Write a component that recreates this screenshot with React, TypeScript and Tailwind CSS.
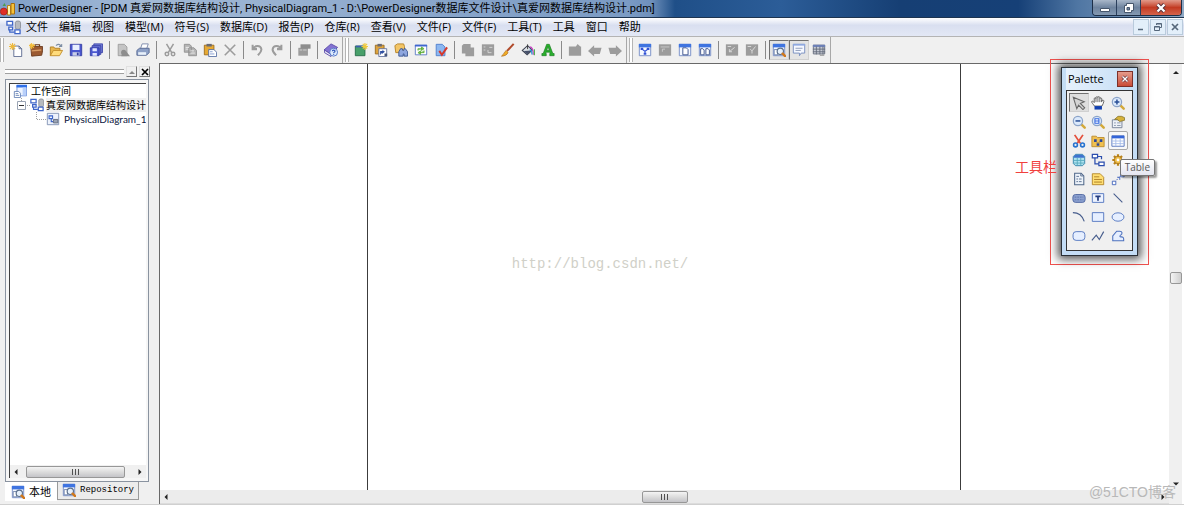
import type { ReactNode } from "react";

const blue = "#3f66c8";
const gray = "#9c9c9c";

const Lens = () => (
  <>
    <circle cx="9.5" cy="9.5" r="3.6" fill="#e6f0fb" stroke="#5b6f8c" strokeWidth="1.3" />
    <path d="M12.2 12.2 15 15" stroke="#d0781c" strokeWidth="2.800" strokeLinecap="round" />
  </>
);
const Win = () => (
  <>
    <path d="M1.5 1.5h13v13h-13z" fill="#f4f8ff" stroke="#7189c4" />
    <path d="M1 1h14v4H1z" fill="#3f74e0" />
  </>
);
const Zoom = ({ sign }: { sign: ReactNode }) => (
  <>
    <path d="m11 11 3.500 3.500" stroke="#d3a93a" strokeWidth="2.8" strokeLinecap="round" />
    <circle cx="6.8" cy="6.8" r="5.300" fill="#dbe9fb" stroke="#8ba3c8" strokeWidth="1.4" />
    {sign}
  </>
);
const GrayWin = () => <path d="M1 1.5h14v13H1z" fill={gray} />;

const icons: Record<string, ReactNode> = {
  new: (
    <>
      <path d="M5.5 3.5h6l3 3v9h-9z" fill="#fff" stroke="#56658c" />
      <path d="M11.5 3.5v3h3" fill="none" stroke="#56658c" />
      <path d="M4 0v8M0 4h8M1 1l6 6M7 1 1 7" stroke="#efb93a" strokeWidth="1.3" />
    </>
  ),
  project: (
    <>
      <path d="M7 4V2h5v2" fill="none" stroke="#6b3a1c" strokeWidth="1.4" />
      <path d="M2 4h13.500v5l-1 5L3 15z" fill="#9b5a31" stroke="#6a3a1e" />
      <path d="M3 9l11-1" stroke="#d89d66" strokeWidth="1.5" />
      <path d="M3 0v7M0 3h7M1 1l4.500 4.500M5.500 1 1 5.500" stroke="#f3bd3c" strokeWidth="1.2" />
    </>
  ),
  open: (
    <>
      <path d="M1.500 14.500V4.500h4l1 1.500h6v3" fill="#e8b64c" stroke="#b07d1e" />
      <path d="m1.500 14.500 3.500-6h10.500l-3.500 6z" fill="#ffdc7c" stroke="#c08a26" />
      <path d="M8 3c2-2 4-2 6 .5M14.500 1v3h-3" fill="none" stroke="#7d8ea5" strokeWidth="1.2" />
    </>
  ),
  save: (
    <>
      <path d="M1.500 1.500h13v13h-13z" fill="#4a56cf" stroke="#323ca2" />
      <path d="M4 2h8v6H4z" fill="#e8efff" />
      <path d="M4 10.500h8v4H4z" fill="#c9cfe8" />
      <path d="M9 11h2v3H9z" fill="#323ca2" />
    </>
  ),
  saveAll: (
    <>
      <path d="M5.500 1h10v10h-10z" fill="#7780d8" stroke="#3b44a8" />
      <path d="M3.500 3h10v10h-10z" fill="#6670d4" stroke="#3b44a8" />
      <path d="M1.500 5.500h10v9h-10z" fill="#4a56cf" stroke="#323ca2" />
      <path d="M4 6h5v3.500H4zM4 11.500h5v3H4z" fill="#dfe5ff" />
    </>
  ),
  preview: (
    <>
      <path d="M2.500 1.500h7l3 3v10h-10z" fill="#c4c4c4" stroke={gray} />
      <path d="M6.500 13a3.200 3.200 0 1 1 5.500-3l4 5H6z" fill="#8d8d8d" />
    </>
  ),
  print: (
    <>
      <path d="m5 7 2-6h7l-2 6z" fill="#fff" stroke="#7685a8" />
      <path d="M1 8.500 4 6h11v5l-3 3H1z" fill="#8da0c6" stroke="#53658f" />
      <path d="M2.500 10.500h9v3h-9z" fill="#e8f0fb" />
    </>
  ),
  cut: (
    <g fill="none" stroke={gray} strokeWidth="1.7">
      <path d="m4 1 6 10M12 1 6 11" />
      <circle cx="4.500" cy="12.500" r="2" />
      <circle cx="11.500" cy="12.500" r="2" />
    </g>
  ),
  copy: (
    <g fill="#b5b5b5" stroke="#8f8f8f">
      <path d="M1.500 1.500h6l2 2v7h-8zM6.500 5.500h6l3 3v6h-9z" />
      <path d="M3 5h4M3 7h3M8.500 9h4M8.500 11.500h5" stroke="#f0f0f0" />
    </g>
  ),
  paste: (
    <>
      <path d="M1.500 2.500h11v11h-11z" fill="#e6a933" stroke="#9b6a1c" />
      <path d="M4 1h6v3H4z" fill="#6a6a72" />
      <path d="M6.500 7.500h6l3 3v5h-9z" fill="#fff" stroke="#50699f" />
      <path d="M8 10h3M8 12.500h5" stroke="#7c96cc" />
    </>
  ),
  delete: <path d="m2 2 12 12M14 2 2 14" stroke={gray} strokeWidth="1.8" />,
  undo: <path d="M3 2v5h5M3.500 7C5 2.500 12 2 13 7c.4 3-2 5-4 7" fill="none" stroke={gray} strokeWidth="2.300" />,
  redo: <path d="M13 2v5H8M12.500 7C11 2.500 4 2 3 7c-.4 3 2 5 4 7" fill="none" stroke={gray} strokeWidth="2.300" />,
  props: (
    <>
      <path d="M1.500 5.500h11v9h-11z" fill={gray} />
      <path d="M4 1.500h11.500v5H4z" fill="#8d8d8d" />
      <path d="M3 8h3m1 0h4" stroke="#d5d5d5" />
    </>
  ),
  help: (
    <>
      <path d="m0 8 8-7 7.500 4L8 13z" fill="#8372d2" stroke="#5647a6" />
      <path d="m.5 8 7.500 5v2.500L.5 11z" fill="#e8e6f6" stroke="#5647a6" />
      <circle cx="11" cy="10.500" r="4.500" fill="#dceafd" stroke="#4b70c4" />
      <path d="M9.500 9.500c.2-2 3.200-1.800 3 0-.1 1-1.500 1-1.500 2.200m0 .8v1" fill="none" stroke="#2950b5" strokeWidth="1.300" />
    </>
  ),
  package: (
    <>
      <path d="M1.500 3.500h11v11h-11z" fill="#48a06a" stroke="#236a47" />
      <path d="M2 3h8v2H2z" fill="#3c5fae" />
      <path d="M12.500 0v8M8.500 4h8M10 1l5 5.500M15 1l-5 5.500" stroke="#f0c93c" strokeWidth="1.300" />
    </>
  ),
  pasteShortcut: (
    <>
      <path d="M1.500 2.500h10v10h-10z" fill="#dda33c" stroke="#97691f" />
      <path d="M4 1h5v3H4z" fill="#6a6a72" />
      <path d="M5.500 6.500h9v9h-9z" fill="#fff" stroke="#5f6f9a" />
      <path d="M7 14V9h3l-1-1.500 3.500 2.500L9 12.500V11" fill="#2e4ea0" />
      <path d="M12 12h3v3h-3z" fill="#46557b" />
    </>
  ),
  find: (
    <>
      <path d="m1 3 3-2h7l1 3v7H2z" fill="#f3c565" stroke="#b58122" />
      <path d="M5.500 10 7.500 6.500H9.500l.5 2h1l.5-2h1.500L15.500 10v5h-4v-2.500h-1V15h-5z" fill="#8ea6de" stroke="#37538f" />
    </>
  ),
  refresh: (
    <>
      <path d="M1.500 2.500h13v11h-13z" fill="#fff" stroke="#5676c2" />
      <path d="M1 2h14v2H1z" fill="#3f66d0" />
      <path d="M4.500 8.500V6.500H10M8.500 4.500l3 2-3 2zM11.500 8.500v2.500H6M7.500 9l-3 2 3 2z" fill="#55a82c" stroke="#55a82c" strokeWidth=".9" fillOpacity=".6" />
    </>
  ),
  check: (
    <>
      <path d="M2.500 1.500h7l3 3v10h-10z" fill="#8cb7f0" stroke="#4d7dcc" />
      <path d="m6 9 3 4.500L15 5" fill="none" stroke="#d5382b" strokeWidth="2.200" />
    </>
  ),
  grayCopy: <path d="M1 3 3 1h8v4h4v10H5v-3H1z" fill={gray} />,
  grayRule: (
    <>
      <GrayWin />
      <path d="M3 8h2M3 4.500h2M9.500 5h3.500M8 8v3h4" fill="none" stroke="#d9d9d9" />
    </>
  ),
  brush: (
    <>
      <path d="m7 9 7.500-8" stroke="#b04a2a" strokeWidth="2.300" />
      <path d="M.5 15c3.500 0 7-1.500 7.500-4.500L6 8.500C3.500 10 3.500 13 .5 15" fill="#f0ac24" stroke="#a8641a" strokeWidth=".7" />
    </>
  ),
  fill: (
    <>
      <path d="m1.500 8.500 6-5.500 5.500 5-6 5.500z" fill="#dfe3e8" stroke="#3c4250" strokeWidth="1.200" />
      <path d="m3 9 9-.5-5 4.500z" fill="#46506a" />
      <path d="M7.500 7V1.500" stroke="#333" />
      <path d="M10 4.500c3 0 4 3 4 9" fill="none" stroke="#c43fc0" strokeWidth="1.500" />
      <path d="M10 8c1.500 0 2.500 2 2.500 5" fill="none" stroke="#2f9bd8" strokeWidth="1.500" />
      <path d="M15.300 7v7" stroke="#49b24b" strokeWidth="1.300" />
    </>
  ),
  font: (
    <path d="M1 14.500V12h1.500L6.500 1.500h3L13.500 12H15v2.500h-5V12h.800l-.5-1.500H5.700L5.200 12H6v2.500zM6.500 8.300h3L8 4.200z" fill="#28b12c" stroke="#14741b" strokeWidth=".7" />
  ),
  grayUp: <path d="M1 4h8l2-3 3 3h1v10.500H1z" fill={gray} />,
  back: <path d="m0 9 7-6.500v3h8.500l-2 7H7v3z" fill={gray} />,
  forward: <path d="m16 9-7-6.500v3H.500l2 7H9v3z" fill={gray} />,
  dgY: (
    <>
      <Win />
      <path d="m4.500 7 3.500 2.500v3M11.500 7 8 9.500" fill="none" stroke="#2f4fd4" strokeWidth="1.300" />
      <path d="M3 5.500h3v2.500H3zM10 5.500h3v2.500h-3zM6.500 11h3v2.500h-3z" fill="#2f4fd4" />
    </>
  ),
  dgGray: (
    <>
      <GrayWin />
      <path d="M3 4.500h10M5 10V7h3" fill="none" stroke="#cfcfcf" />
    </>
  ),
  dgPage: (
    <>
      <Win />
      <path d="M5.500 5.500h4l2 2v6h-6z" fill="#fff" stroke="#334a86" />
    </>
  ),
  dgPages: (
    <>
      <Win />
      <path d="M3 6.500h2.500l1.500 1.500v5.500H3zM9 6.500h2.500L13 8v5.500H9z" fill="#fff" stroke="#334a86" />
    </>
  ),
  grayA: (
    <>
      <GrayWin />
      <path d="M3 4h4M5 10l6-5M5 7v3h3" fill="none" stroke="#e0e0e0" />
    </>
  ),
  grayB: (
    <>
      <GrayWin />
      <path d="M3 4h4M8 9l4-5M6 7l2 2v3" fill="none" stroke="#e0e0e0" />
    </>
  ),
  browse: (
    <>
      <Win />
      <path d="M2.500 7.500h4v6h-4z" fill="#fff" stroke="#6c7fa8" />
      <Lens />
    </>
  ),
  output: (
    <>
      <path d="M1.500 1.500h13v10h-4l-2 3v-3h-7z" fill="#f5f8ff" stroke="#7088bd" />
      <path d="M1 1h14v2H1z" fill="#8fa9e0" />
      <path d="M4 6h8M4 8.500h6" stroke="#8593b4" />
    </>
  ),
  grid: (
    <>
      <path d="M1.500 2.500h13v10h-13z" fill="#c6cad4" stroke="#646b7c" />
      <path d="M1 2h14v2.500H1z" fill="#6c80b8" />
      <path d="M5 4v9M9 4v9M12.500 4v9M1 7h14M1 10h14" stroke="#646b7c" />
      <path d="M9 14h5" stroke="#888" />
    </>
  ),
  workspace: (
    <>
      <path d="M4.500 1.500h11v12h-11z" fill="#eef4ff" stroke="#6c8fda" />
      <path d="M4 1h12v3H4z" fill="#2f6fe8" />
      <path d="M11 4h4v9h-4z" fill="#b9d0fa" />
      <path d="M1.500 8.500h5l2 2v5h-7z" fill="#fff" stroke="#6480b4" />
      <path d="M3 11h3M3 13h4" stroke="#6480b4" />
    </>
  ),
  model: (
    <>
      <path d="M10 2.500c0-2 5.500-2 5.500 0v6c0 2-5.500 2-5.500 0z" fill="#b6bac0" stroke="#80858d" strokeWidth=".8" />
      <path d="M1 1.500h6v4H1zM9.500 10.500h5.500v4H9.500zM3 7.500h4v3H3z" fill="#fff" stroke={blue} strokeWidth="1.400" />
      <path d="M4 10.500v2.500h5" fill="none" stroke={blue} strokeWidth="1.300" />
    </>
  ),
  diagram: (
    <>
      <path d="M1.500 1.500h13v13h-13z" fill="#eef3fc" stroke="#7c8eb0" />
      <path d="M3.500 4.500h4v3h-4zM6 8v3h2" fill="none" stroke={blue} strokeWidth="1.300" />
      <path d="M8.500 8.500h5v4h-5z" fill="#9aa3b4" stroke="#60697c" />
    </>
  ),
  app: (
    <>
      <path d="M7.500 4.500h3v9.500h-3z" fill="#fff2ad" stroke="#b88218" />
      <path d="M11 2.500h3.500v10.500H11z" fill="#f5c23a" stroke="#a66f10" />
      <path d="m2.500 5 2-3 1.500 3z" fill="#4c9c50" />
      <circle cx="3.800" cy="10.500" r="3.500" fill="#df2f25" stroke="#98150f" strokeWidth=".6" />
    </>
  ),
  pointer: <path d="m1.500 1.500 12.500 5-4.500 2 5 5-2 2-5-5-2 4z" fill="#d4d4d4" stroke="#666" strokeWidth="1.200" />,
  hand: (
    <>
      <path d="M4 11.500C3 10 .3 7 .8 6.300S2.700 6 3.700 7.500V3c0-1.300 2-1.300 2 0V1.800c0-1.300 2.200-1.300 2.200 0V1.500c0-1.200 2.200-1 2.200.5v1c0-1.200 2.200-1 2.200.3V6c.7-1.800 2.500-1.500 2.400 0-.2 2-1.200 3.500-2.200 5.500z" fill="#fff" stroke="#444" strokeWidth=".9" />
      <path d="M5.700 3v4M7.900 2v5M10.100 3v4M12.200 5v2" stroke="#444" strokeWidth=".9" />
      <path d="M4 11.500h8.500V15.500H4z" fill="#1240b0" />
    </>
  ),
  zoomIn: <Zoom sign={<path d="M4 6.800h5.600M6.800 4v5.600" stroke="#274d96" strokeWidth="1.700" />} />,
  zoomOut: <Zoom sign={<path d="M4 6.800h5.600" stroke="#274d96" strokeWidth="1.700" />} />,
  zoomFit: <Zoom sign={<path d="M4.500 4.200h4.500v5.200H4.500zM5 6.800h4" fill="#fff" stroke="#3468e0" strokeWidth="1.200" />} />,
  openProps: (
    <>
      <path d="M1.500 5.500h11v9h-11z" fill="#edf1f7" stroke="#6f7b92" />
      <path d="M3.500 9h2m1.500 0h4M3.500 12h2m1.500 0h4" stroke="#8490a8" />
      <path d="M4 5 8 1.500h4L15.500 3v3L10 7.500 7 5z" fill="#d6b23c" stroke="#7d6a20" strokeWidth=".8" />
    </>
  ),
  scissors: (
    <>
      <path d="m3 1 6.500 9.500M12.500 1 6 10.500" stroke="#e4503b" strokeWidth="2" />
      <g fill="none" stroke="#2672cf" strokeWidth="1.800">
        <circle cx="4" cy="12.500" r="2.200" />
        <circle cx="12" cy="12.500" r="2.200" />
      </g>
    </>
  ),
  folder: (
    <>
      <path d="M1 14.500v-12h5l1.500 1.500h7.500v10.500z" fill="#f0c050" stroke="#b98a2c" />
      <path d="M3.500 6h3v3h-3zM10 6h3v3h-3zM6.500 10.500h3v3h-3z" fill="#27459c" />
      <path d="m6 8.500 2 2.500 2-2.500" fill="none" stroke="#8a7a50" />
    </>
  ),
  table: (
    <>
      <path d="M1 2h14v12H1z" fill="#fff" stroke="#4f70bd" />
      <path d="M1 2h14v3H1z" fill="#3465d8" />
      <path d="M5.500 5v9M10.500 5v9M1 8h14M1 11h14" stroke="#a5bbe8" />
    </>
  ),
  view: (
    <>
      <path d="M1.500 4 4 1.500h8L14.500 4v8L12 14.500H4L1.500 12z" fill="#afe3f0" stroke="#2e7ba5" />
      <path d="M2 4 4 2h8l2 2v1.500H2z" fill="#3e73cf" />
      <path d="M6 5.500v9M10 5.500v9M1.500 8.500h13M1.500 11.500h13" stroke="#56a9bd" />
    </>
  ),
  reference: (
    <g fill="#fff" stroke="#2b4eae" strokeWidth="1.400">
      <path d="M4.500 5.500v7H9M8 4h4v3" fill="none" />
      <path d="M1.500 1.500h6v4h-6zM9 10.500h6v4H9z" />
    </g>
  ),
  procedure: (
    <>
      <path d="M8 1.500v13M1.500 8h13M3.400 3.400l9.200 9.200M12.600 3.400l-9.200 9.200" stroke="#b98218" strokeWidth="2.500" />
      <circle cx="8" cy="8" r="4.300" fill="#edbd4a" stroke="#a87213" />
      <circle cx="8" cy="8" r="1.600" fill="#fff" />
    </>
  ),
  file: (
    <>
      <path d="M3 1.500h7.500l3 3v10H3z" fill="#edf3fa" stroke="#52698b" strokeWidth="1.200" />
      <path d="M10 1.500v3h3M5 5h3M5 8h2m1 0h3M5 11h2m1 0h3" fill="none" stroke="#52698b" />
    </>
  ),
  note: (
    <>
      <path d="M1.500 2h9L14.500 6v8.500h-13z" fill="#ffdf73" stroke="#b08226" />
      <path d="M3.500 5.500h6M3.500 8.500h9M3.500 11.500h9" stroke="#a57721" />
    </>
  ),
  link: (
    <>
      <path d="m4 12 7-8" stroke="#3b5fb9" strokeDasharray="2 1.500" />
      <path d="M1.500 10.500h4v4h-4zM11 1.500h4v4h-4z" fill="#fff" stroke="#3b5fb9" />
      <path d="M7 6h3v3" fill="none" stroke="#3b5fb9" />
    </>
  ),
  title: (
    <>
      <rect x="1" y="4" width="14" height="9" rx="3" fill="#8ba0cf" stroke="#4c649f" />
      <path d="M3 7h10M3 10h10" stroke="#5b72ad" strokeDasharray="2 1" />
    </>
  ),
  text: (
    <>
      <path d="M1.500 3h13v10h-13z" fill="#edf3ff" stroke="#4c70bd" />
      <path d="M5 6h6M8 6v5" stroke="#263f82" strokeWidth="2" />
    </>
  ),
  line: <path d="m3 3 10 10" stroke="#465c8c" strokeWidth="1.300" />,
  arc: <path d="M1 3c6 0 11 4 13 10" fill="none" stroke="#465c8c" strokeWidth="1.300" />,
  rect: <path d="M1.500 3h13v10h-13z" fill="#e6efff" stroke="#4c70bd" />,
  ellipse: <ellipse cx="8" cy="8" rx="6.800" ry="4.800" fill="#e6efff" stroke="#4c70bd" />,
  rounded: <rect x="1.200" y="3" width="13.500" height="10" rx="3.500" fill="#e6efff" stroke="#4c70bd" />,
  polyline: <path d="m1 13 5-6 3.500 5L14.500 3" fill="none" stroke="#465c8c" strokeWidth="1.300" />,
  polygon: <path d="M2 13.500V8l4.500-5.500H10c3 0 3.500 3 1 4.500-1.500 1-1 2 .5 2 2-.2 3 1 3 2.500v2z" fill="#e6efff" stroke="#4c70bd" strokeWidth="1.200" />,
};

function Icon({ name, className = "size-3.5" }: { name: string; className?: string }) {
  return (
    <svg viewBox="0 0 16 16" className={`${className} shrink-0`} aria-hidden="true">
      {icons[name]}
    </svg>
  );
}

const menus = ["文件", "编辑", "视图", "模型(M)", "符号(S)", "数据库(D)", "报告(P)", "仓库(R)", "查看(V)", "文件(F)", "文件(F)", "工具(T)", "工具", "窗口", "帮助"];

const toolbars: string[][][] = [
  [["new", "project", "open", "save", "saveAll"], ["preview", "print"], ["cut", "copy", "paste", "delete"], ["undo", "redo"], ["props"], ["help"]],
  [["package", "pasteShortcut", "find", "refresh", "check"], ["grayCopy", "grayRule", "brush", "fill", "font"], ["grayUp", "back", "forward"]],
  [["dgY", "dgGray", "dgPage", "dgPages"], ["grayA", "grayB"], ["browse", "output", "grid"]],
];

const paletteTools = [
  "pointer", "hand", "zoomIn",
  "zoomOut", "zoomFit", "openProps",
  "scissors", "folder", "table",
  "view", "reference", "procedure",
  "file", "note", "link",
  "title", "text", "line",
  "arc", "rect", "ellipse",
  "rounded", "polyline", "polygon",
];

function TitleBar() {
  return (
    <header className="flex h-[18px] shrink-0 items-center border-b border-[#1d3450] bg-[linear-gradient(90deg,#7f9fc8_0%,#a3bad6_12%,#86a3c9_40%,#7b9bc4_53%,#6f90bb_55%,#1f4f88_57%,#2c5d98_66%,#163f74_76%,#164077_86%,#4f76a3_91%,#8fa8c4_100%)]">
      <Icon name="app" className="size-4" />
      <h1 className="ml-0.5 flex-1 truncate font-['Roboto','Noto_Sans_CJK_SC',sans-serif] text-[11px] leading-[17px] text-black">
        PowerDesigner - [PDM 真爱网数据库结构设计, PhysicalDiagram_1 - D:\PowerDesigner数据库文件设计\真爱网数据库结构设计.pdm]
      </h1>
      <div className="mr-0.5 flex h-4 self-start overflow-hidden rounded-b-[4px] border border-t-0 border-[#1d2f48]">
        <button aria-label="最小化" className="flex w-6 items-center justify-center border-r border-[#2b3f5c] bg-linear-to-b from-[#a9b7c9] via-[#6f849f] to-[#8499b2]">
          <svg viewBox="0 0 12 10" className="h-2.5 w-3"><path d="M1.500 5.500h9v3h-9z" fill="#fff" stroke="#46566c" /></svg>
        </button>
        <button aria-label="还原" className="flex w-6 items-center justify-center border-r border-[#2b3f5c] bg-linear-to-b from-[#a9b7c9] via-[#6f849f] to-[#8499b2]">
          <svg viewBox="0 0 12 12" className="size-3"><path d="M3.500 1.500h7v7h-2v2h-7v-7h2z" fill="#fff" stroke="#46566c" /><path d="M4 5.500h2.500V8H4z" fill="#6f849f" stroke="#46566c" /></svg>
        </button>
        <button aria-label="关闭" className="flex w-10 items-center justify-center bg-linear-to-b from-[#e0998a] via-[#c23a22] to-[#d4624a]">
          <svg viewBox="0 0 12 12" className="size-3"><path d="m2.500 2.500 7 7M9.500 2.500l-7 7" stroke="#54303a" strokeWidth="4" /><path d="m2.500 2.500 7 7M9.500 2.500l-7 7" stroke="#fff" strokeWidth="2.300" /></svg>
        </button>
      </div>
    </header>
  );
}

function MenuBar() {
  const mdi = "flex size-4 items-center justify-center border border-[#b9cbdc] bg-[#e3effa]";
  return (
    <nav className="flex h-[19px] shrink-0 items-center border-b border-[#b4b4b4] bg-linear-to-b from-white via-[#d9dff0] via-40% to-[#e3e8f5] pl-1.5">
      <Icon name="model" className="size-[15px]" />
      <div className="ml-[5px] flex flex-1 gap-[11px]">
        {menus.map((m, i) => (
          <button key={i} className="whitespace-nowrap text-[11px] leading-4">{m}</button>
        ))}
      </div>
      <div className="flex gap-px pr-px">
        <button aria-label="最小化文档" className={mdi}>
          <svg viewBox="0 0 10 10" className="size-2.5"><path d="M2 7.500h5" stroke="#55677b" strokeWidth="1.500" /></svg>
        </button>
        <button aria-label="还原文档" className={mdi}>
          <svg viewBox="0 0 10 10" className="size-2.5"><path d="M3.500 3V1.500h5v4H7M1.500 4.500h5v4h-5zM1.500 5h5M3.500 2h5" fill="none" stroke="#55677b" /></svg>
        </button>
        <button aria-label="关闭文档" className={mdi}>
          <svg viewBox="0 0 10 10" className="size-2.5"><path d="m2 2 6 6M8 2 2 8" stroke="#55677b" strokeWidth="1.700" /></svg>
        </button>
      </div>
    </nav>
  );
}

function ToolBar() {
  return (
    <div className="flex h-[26px] shrink-0 bg-[#f0f0f0]">
      {toolbars.map((bar, i) => (
        <div key={i} className={`flex items-center border-r border-[#a8a8a8] pr-px ${i ? "pl-0.5" : ""}`}>
          <span className="mr-0.5 h-6 w-1 border-x border-[#b4b4b4] bg-white" />
          {bar.map((group, j) => (
            <div key={j} className="flex items-center">
              {j > 0 && <span className="mx-[3px] h-[18px] w-px bg-[#8a8a8a]" />}
              {group.map((name) => (
                <button
                  key={name}
                  aria-label={name}
                  className={`flex h-5 w-5 items-center justify-center border ${name === "browse" || name === "output" ? "border-[#707070] border-r-[#d0d0d0] border-b-[#d0d0d0] bg-[#e4e4e4]" : "border-transparent"}`}
                >
                  <Icon name={name} />
                </button>
              ))}
            </div>
          ))}
        </div>
      ))}
    </div>
  );
}

function Arrow({ dir }: { dir: "up" | "down" | "left" | "right" }) {
  const paths = { up: "M1 6h6L4 3z", down: "M1 2.500h6L4 5.500z", left: "M5.500 1v6L2.500 4z", right: "M2.500 1v6l3-3z" };
  return (
    <button aria-label={dir} className="flex size-3 shrink-0 items-center justify-center">
      <svg viewBox="0 0 8 8" className="size-2"><path d={paths[dir]} fill="#222" /></svg>
    </button>
  );
}

function HThumb({ className }: { className: string }) {
  return (
    <span className={`flex h-3 items-center justify-center gap-0.5 rounded-xs border border-[#979797] bg-linear-to-b from-[#f4f4f4] via-[#dcdcdc] to-[#c4c4c8] ${className}`}>
      <i className="h-1.5 w-px bg-[#505050]" />
      <i className="h-1.5 w-px bg-[#505050]" />
      <i className="h-1.5 w-px bg-[#505050]" />
    </span>
  );
}

function Browser() {
  return (
    <aside className="flex w-40 shrink-0 flex-col border-r border-[#696969] bg-[#f0f0f0] pt-[3px] pr-[9px] pl-[5px]">
      <div className="flex h-[11px] items-center gap-0.5">
        <span className="h-[5px] flex-1 border-y border-[#a0a0a0] bg-white" />
        <button aria-label="折叠" className="flex h-[11px] w-[11px] items-center justify-center border border-[#e0e0e0] border-r-[#777] border-b-[#777]">
          <svg viewBox="0 0 8 8" className="size-2"><path d="M1 6h6L4 3z" fill="#888" /></svg>
        </button>
        <button aria-label="关闭面板" className="flex h-[11px] w-[11px] items-center justify-center border border-[#e0e0e0] border-r-[#777] border-b-[#777]">
          <svg viewBox="0 0 8 8" className="size-2"><path d="m1 1 6 6M7 1 1 7" stroke="#000" strokeWidth="1.700" /></svg>
        </button>
      </div>
      <div className="mt-0.5 mr-px flex min-h-0 flex-1 flex-col border border-[#8a93a0] bg-[#f6f6f6] p-[3px] pr-0.5">
        <div className="flex min-h-0 flex-1 flex-col border-t border-l border-[#404040] bg-white">
          <ul className="flex-1 overflow-hidden text-[10px] leading-[14px] whitespace-nowrap">
            <li className="flex h-3.5 items-center gap-1 pl-[3px]">
              <Icon name="workspace" />
              <span>工作空间</span>
            </li>
            <li className="flex h-3.5 items-center pl-[7px]">
              <svg viewBox="0 0 13 14" className="h-3.5 w-[13px] shrink-0">
                <path d="M4.500 0v3M8 7.500h5" stroke="#a0a0a0" strokeDasharray="1 1" />
                <path d="M.5 3.500h8v8h-8z" fill="#fff" stroke="#9aa4b4" />
                <path d="M2 7.500h5" stroke="#333" />
              </svg>
              <Icon name="model" />
              <span className="ml-0.5 bg-[#f0f0f0]">真爱网数据库结构设计</span>
            </li>
            <li className="flex h-3.5 items-center pl-[26px]">
              <svg viewBox="0 0 10 14" className="h-3.5 w-2.5 shrink-0"><path d="M.5 0v7.500H10" fill="none" stroke="#a0a0a0" strokeDasharray="1 1" /></svg>
              <Icon name="diagram" />
              <span className="ml-1 font-['Lato','Noto_Sans_CJK_SC',sans-serif] text-[#0b1540]">PhysicalDiagram_1</span>
            </li>
          </ul>
          <div className="flex h-[13px] items-center bg-[#f0f0f0]">
            <Arrow dir="left" />
            <div className="flex flex-1 px-1"><HThumb className="w-[95%]" /></div>
            <Arrow dir="right" />
          </div>
        </div>
      </div>
      <div role="tablist" className="mb-[3px] flex h-[19px] items-start">
        <button role="tab" aria-selected="true" className="flex h-[19px] items-center gap-1 bg-white px-1.5 text-[11px] leading-4">
          <Icon name="browse" />
          本地
        </button>
        <button role="tab" aria-selected="false" className="flex h-[18px] items-center gap-1 border border-t-0 border-[#9a9a9a] bg-[#ececec] px-1 pb-0.5 font-['Liberation_Mono',monospace] text-[9px] leading-4 font-medium">
          <Icon name="browse" />
          Repository
        </button>
      </div>
    </aside>
  );
}

function Palette() {
  return (
    <div className="absolute -top-[5px] right-[35px] h-[206px] w-[99px] border border-[#f0514e] p-[7px] px-2.5">
      <section className="flex h-[189px] w-[77px] flex-col border border-[#2b3036] bg-[#c4ddf5] px-1 pb-1 shadow-[0_0_9px_3px_rgba(0,0,0,0.7)]">
        <div className="flex h-[22px] items-center justify-between bg-linear-to-r from-[#e6f1fc] to-[#c4ddf5] pl-0.5">
          <h2 className="font-['Open_Sans',sans-serif] text-[11px] leading-4">Palette</h2>
          <button aria-label="关闭工具箱" className="flex size-4 items-center justify-center border border-[#7d3029] bg-linear-to-b from-[#e59b8c] to-[#c94b37]">
            <svg viewBox="0 0 8 8" className="size-2"><path d="m1.500 1.500 5 5M6.500 1.500l-5 5" stroke="#653039" strokeWidth="2.800" /><path d="m1.500 1.500 5 5M6.500 1.500l-5 5" stroke="#fff" strokeWidth="1.400" /></svg>
          </button>
        </div>
        <div className="grid flex-1 auto-rows-[19px] grid-cols-3 border border-[#333] bg-[#f0f0f0] pt-0.5 pr-1 pl-0.5">
          {paletteTools.map((name) => (
            <button
              key={name}
              aria-label={name}
              className={`flex items-center justify-center border ${name === "pointer" ? "border-[#707070] border-r-[#d0d0d0] border-b-[#d0d0d0] bg-[#dedede]" : name === "table" ? "rounded-xs border-[#a8a8a8] bg-[#f8f8f8]" : "border-transparent"}`}
            >
              <Icon name={name} />
            </button>
          ))}
        </div>
      </section>
      <span role="tooltip" className="absolute top-[99px] -right-[7px] rounded-xs border border-[#767676] bg-linear-to-b from-white to-[#e4e5f0] px-1 font-['Open_Sans',sans-serif] text-[10px] leading-[15px] text-[#575757] shadow-[2px_2px_2px_rgba(0,0,0,0.4)]">
        Table
      </span>
      <span className="absolute top-[97px] right-[91px] text-sm leading-5 whitespace-nowrap text-[#f0413e]">工具栏</span>
    </div>
  );
}

function Workspace() {
  return (
    <main className="relative grid min-w-0 flex-1 grid-cols-[1fr_13px] grid-rows-[1fr_14px] border-t border-[#696969] bg-white pr-0.5">
      <div className="grid grid-cols-[207fr_593fr_208fr]">
        <div />
        <div className="flex items-center justify-center border-x border-[#3c3c3c]">
          <p className="mt-[-26px] pr-32 font-['Liberation_Mono',monospace] text-sm leading-5 text-[#d0d0c8]">http://blog.csdn.net/</p>
        </div>
        <div />
      </div>
      <div className="flex flex-col items-center bg-[#f0f0f0] pt-0.5">
        <Arrow dir="up" />
        <span className="mt-auto mb-auto h-3 w-3 rounded-xs border border-[#979797] bg-linear-to-r from-[#f4f4f4] to-[#cfcfcf]" />
        <Arrow dir="down" />
      </div>
      <div className="flex items-center border-b border-[#dcdcdc] bg-[#ececec]">
        <Arrow dir="left" />
        <div className="flex flex-1 justify-center"><HThumb className="w-[46px]" /></div>
        <Arrow dir="right" />
      </div>
      <div className="bg-[#f0f0f0]" />
      <span className="absolute right-2 bottom-0.5 font-['Liberation_Sans','Noto_Sans_CJK_SC',sans-serif] text-sm leading-5 text-[#b8b8b8]">@51CTO博客</span>
      <Palette />
    </main>
  );
}

export default function App() {
  return (
    <div className="flex h-screen flex-col overflow-hidden bg-[#f0f0f0] font-['Open_Sans','Noto_Sans_CJK_SC',sans-serif] text-black">
      <TitleBar />
      <MenuBar />
      <ToolBar />
      <div className="flex min-h-0 flex-1">
        <Browser />
        <Workspace />
      </div>
      <footer className="h-[5px] shrink-0 border-t border-[#d0d0d0] bg-white" />
    </div>
  );
}
